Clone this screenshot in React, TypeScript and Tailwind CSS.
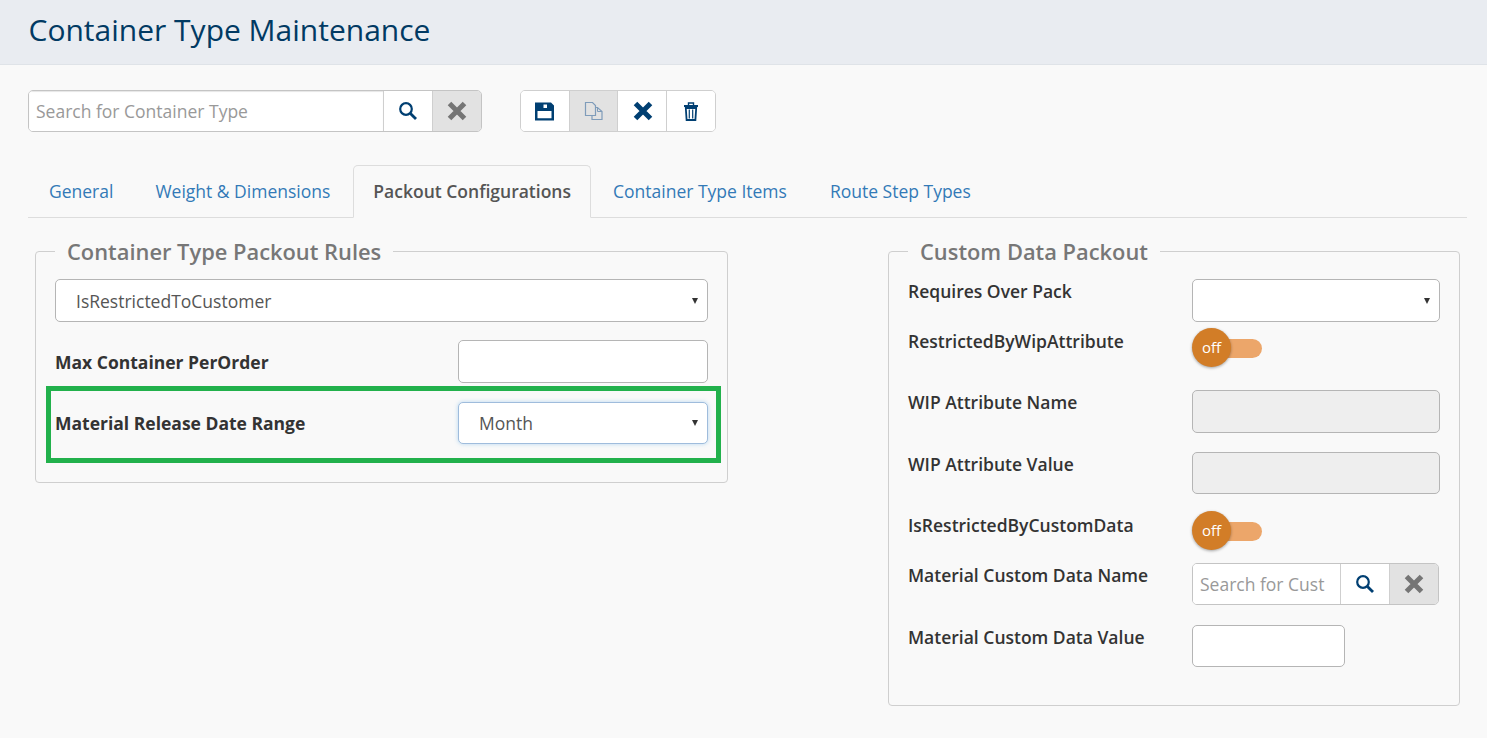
import React from "react";

const Search = () => (
  <svg width="20" height="20" viewBox="0 0 20 20" fill="none" stroke="#003f72" strokeWidth="2.2">
    <circle cx="8" cy="8" r="5.8" />
    <path d="M12.4 12.4 L18 18" strokeWidth="2.8" />
  </svg>
);
const Cross = ({ color }: { color: string }) => (
  <svg width="22" height="22" viewBox="0 0 22 22" fill="none" stroke={color} strokeWidth="5">
    <path d="M3.5 3.5 L18.5 18.5 M18.5 3.5 L3.5 18.5" />
  </svg>
);
const Save = () => (
  <svg width="19" height="19" viewBox="0 0 19 19" fill="#003f72">
    <path fillRule="evenodd" d="M0 .5h16l3 3v15H0z M8.5 2.5V6H12V2.5z M2.5 9v7.2h14V9z" />
  </svg>
);
const Copy = () => (
  <svg width="20" height="20" viewBox="0 0 20 20" fill="none" stroke="#7f9cba" strokeWidth="1.2" className="ml-[1px]">
    <path d="M1.5 1.5h7l3 3v10h-10z" />
    <path d="M11.5 6.5h2l4.5 4v8h-10v-4" />
    <path d="M13.5 6.5v4h4.5" strokeWidth="1" />
  </svg>
);
const Trash = () => (
  <svg width="14" height="19" viewBox="0 0 14 19" fill="none" stroke="#003f72" strokeWidth="1.8">
    <path d="M0 4h14" strokeWidth="2" />
    <path d="M4.5 3V1h5v2" strokeWidth="1.4" />
    <path d="M1.8 6l.8 12h8.8l.8-12z" />
    <path d="M5.3 7.5v9M8.7 7.5v9" strokeWidth="1.2" />
  </svg>
);

const Caret = () => (
  <span className="absolute right-[9px] top-1/2 -translate-y-1/2 w-0 h-0 border-x-[3.25px] border-x-transparent border-t-[6.5px] border-t-[#333]" />
);

const Toggle = () => (
  <div className="relative w-[70px] h-[40px]">
    <div className="absolute left-[12px] top-[11px] w-[58px] h-[19px] rounded-full bg-[#eca66a]" />
    <div className="absolute left-0 top-0 w-[39px] h-[39px] rounded-full bg-[#d27d27] shadow-[0_1px_3px_rgba(0,0,0,0.35)] flex items-center justify-center text-white text-[15px]">
      off
    </div>
  </div>
);

const IconBtn = ({ children, grey, last, narrow }: { children: React.ReactNode; grey?: boolean; last?: boolean; narrow?: boolean }) => (
  <div className={`${narrow ? "w-[48px]" : "w-[49px]"} flex items-center justify-center ${last ? "" : "border-r border-[#cfcfcf]"} ${grey ? "bg-[#e2e2e2]" : "bg-white"}`}>
    {children}
  </div>
);

const Row = ({ label, top, children, className }: { label: string; top: string; children: React.ReactNode; className: string }) => (
  <div className={`flex ${className}`}>
    <div className={`w-[284px] shrink-0 text-[#333] font-semibold text-[17.5px] leading-[24px] ${top}`}>{label}</div>
    {children}
  </div>
);

export default function App() {
  return (
    <div className="h-[738px] overflow-hidden bg-[#f9f9f9] font-['Open_Sans',sans-serif]">
      <header className="h-[65px] bg-[#e9ecf1] border-b border-[#dfe3e8] pl-[28.5px] flex items-center">
        <h1 className="text-[30px] text-[#013a63] leading-none -mt-[5px]">Container Type Maintenance</h1>
      </header>

      <main className="pl-[28px] pr-[20px] pt-[25px]">
        <div className="flex gap-[38px] h-[42px]">
          <div className="flex w-[454px] rounded-[5px] overflow-hidden border border-[#c4c4c4]">
            <div className="flex-1 bg-white border-r border-[#cfcfcf] pl-[7px] flex items-center text-[17.5px] text-[#999] shadow-[inset_0_1px_1px_rgba(0,0,0,0.1)]">
              Search for Container Type
            </div>
            <IconBtn><Search /></IconBtn>
            <IconBtn grey last narrow><Cross color="#757575" /></IconBtn>
          </div>
          <div className="flex w-[196px] rounded-[5px] overflow-hidden border border-[#cfcfcf]">
            <IconBtn><Save /></IconBtn>
            <IconBtn grey><Copy /></IconBtn>
            <IconBtn><span className="pl-[2px]"><Cross color="#003f72" /></span></IconBtn>
            <IconBtn last><Trash /></IconBtn>
          </div>
        </div>

        <nav className="mt-[33px] h-[53px] border-b border-[#dddddd] flex text-[17.5px] text-[#337ab7]">
          <span className="px-[21px] pt-[13px]">General</span>
          <span className="pl-[21px] pr-[23px] pt-[13px]">Weight &amp; Dimensions</span>
          <span className="h-[53px] px-[19px] pt-[12px] bg-[#f9f9f9] border border-[#dddddd] border-b-[#f9f9f9] rounded-t-[5px] text-[#555] font-semibold">
            Packout Configurations
          </span>
          <span className="px-[22px] pt-[13px]">Container Type Items</span>
          <span className="px-[21px] pt-[13px]">Route Step Types</span>
        </nav>

        <div className="flex justify-between pl-[7px] pr-[7px] mt-[20px]">
          <fieldset className="relative w-[693px] h-[245px] border border-[#cfcfcf] rounded-[4px] px-[19px]">
            <legend className="px-[12px] pt-[2px] text-[21.875px] font-semibold text-[#777] leading-[24px]">Container Type Packout Rules</legend>
            <div className="relative h-[43px] mt-[15px] bg-white border border-[#b5b5b5] rounded-[5px] pl-[20px] pt-[2px] flex items-center text-[17.5px] text-[#555]">
              IsRestrictedToCustomer
              <Caret />
            </div>
            <div className="flex items-center justify-between mt-[18px]">
              <span className="text-[17.5px] font-bold text-[#333] pt-[2px]">Max Container PerOrder</span>
              <div className="w-[250px] h-[43px] bg-white border border-[#b5b5b5] rounded-[5px]" />
            </div>
            <div className="flex items-center justify-between mt-[19px]">
              <span className="text-[17.5px] font-bold text-[#333]">Material Release Date Range</span>
              <div className="relative w-[250px] h-[42px] bg-white border border-[#9fbcdc] rounded-[5px] pl-[20px] flex items-center text-[17.5px] text-[#555] shadow-[0_0_4px_rgba(102,175,233,0.45)]">
                Month
                <Caret />
              </div>
            </div>
            <div className="absolute left-[10px] top-[122px] w-[675px] h-[77px] border-[5px] border-[#22b14c]" />
          </fieldset>

          <fieldset className="w-[572px] h-[468px] border border-[#cfcfcf] rounded-[4px] pl-[19px] pr-[19px]">
            <legend className="px-[12px] pt-[2px] text-[21.875px] font-semibold text-[#777] leading-[24px]">Custom Data Packout</legend>
            <Row label="Requires Over Pack" top="mt-[0px]" className="mt-[15px]">
              <div className="relative w-[248px] h-[43px] bg-white border border-[#b5b5b5] rounded-[5px]"><Caret /></div>
            </Row>
            <Row label="RestrictedByWipAttribute" top="pt-[1px]" className="mt-[6px] h-[56px]">
              <Toggle />
            </Row>
            <Row label="WIP Attribute Name" top="pt-0" className="mt-[6px] h-[62px]">
              <div className="w-[248px] h-[43px] bg-[#eeeeee] border border-[#b5b5b5] rounded-[5px]" />
            </Row>
            <Row label="WIP Attribute Value" top="pt-0" className="h-[59px]">
              <div className="w-[248px] h-[42px] bg-[#eeeeee] border border-[#b5b5b5] rounded-[5px]" />
            </Row>
            <Row label="IsRestrictedByCustomData" top="pt-[2px]" className="h-[52px]">
              <Toggle />
            </Row>
            <Row label="Material Custom Data Name" top="pt-0" className="h-[62px]">
              <div className="flex w-[247px] h-[42px] rounded-[5px] overflow-hidden border border-[#c4c4c4]">
                <div className="flex-1 bg-white border-r border-[#cfcfcf] pl-[7px] flex items-center text-[17.5px] text-[#999] whitespace-nowrap overflow-hidden">Search for Cust</div>
                <IconBtn><Search /></IconBtn>
                <IconBtn grey last narrow><Cross color="#757575" /></IconBtn>
              </div>
            </Row>
            <Row label="Material Custom Data Value" top="pt-0" className="h-[42px]">
              <div className="w-[153px] h-[42px] bg-white border border-[#b5b5b5] rounded-[5px]" />
            </Row>
          </fieldset>
        </div>
      </main>
    </div>
  );
}
